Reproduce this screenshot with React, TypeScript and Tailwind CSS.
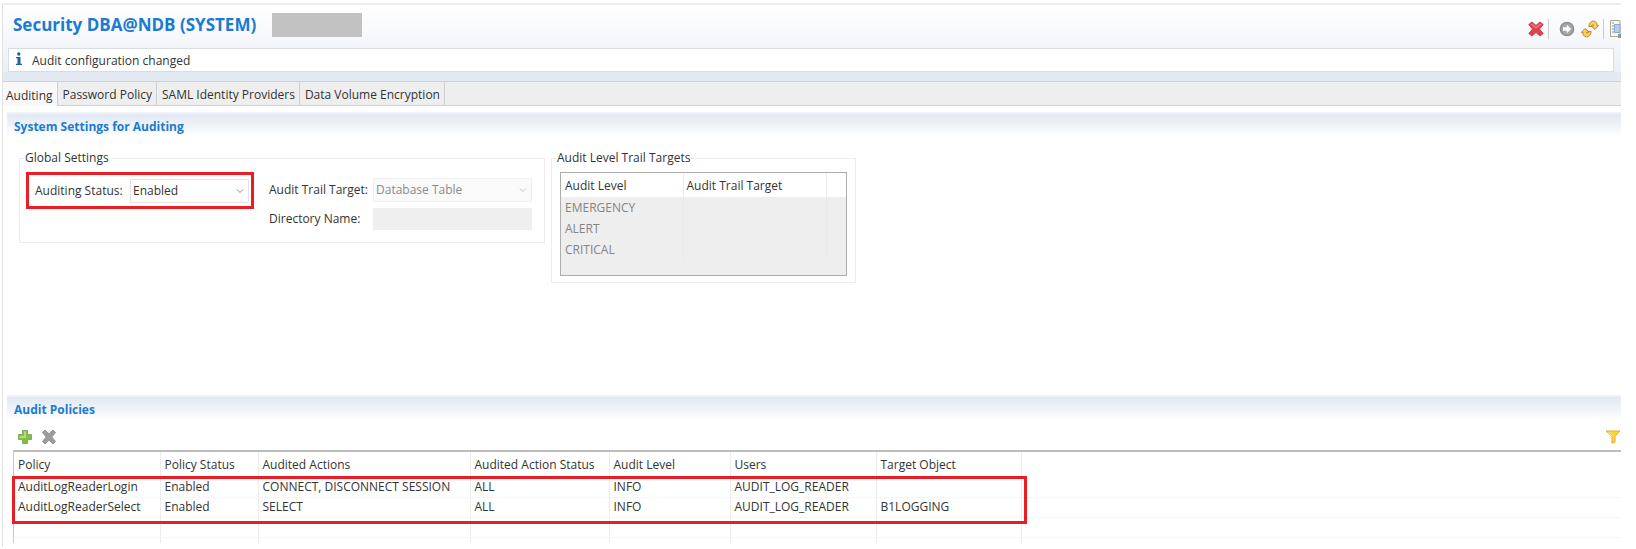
import React from "react";

const tabs = ["Auditing", "Password Policy", "SAML Identity Providers", "Data Volume Encryption"];

const levels = ["EMERGENCY", "ALERT", "CRITICAL"];

const headings = [
  "Policy",
  "Policy Status",
  "Audited Actions",
  "Audited Action Status",
  "Audit Level",
  "Users",
  "Target Object",
];

const policies = [
  ["AuditLogReaderLogin", "Enabled", "CONNECT, DISCONNECT SESSION", "ALL", "INFO", "AUDIT_LOG_READER", ""],
  ["AuditLogReaderSelect", "Enabled", "SELECT", "ALL", "INFO", "AUDIT_LOG_READER", "B1LOGGING"],
];

function RedCross() {
  return (
    <svg width="16" height="16" viewBox="0 0 16 16" aria-hidden="true">
      <path
        d="M4 1 .8 3.500 4.500 8 .8 12.500 4 15l4-3.500 4 3.500 3.200-2.500L11.500 8l3.700-4.500L12 1 8 4.500Z"
        fill="#dc4550"
        stroke="#cf3f4b"
        strokeLinejoin="round"
      />
      <path d="M3.200 3 8 6.800 12.800 3" fill="none" stroke="#ef8187" strokeWidth="1.200" />
    </svg>
  );
}

function ArrowDisc() {
  return (
    <svg width="16" height="16" viewBox="0 0 16 16" aria-hidden="true">
      <circle cx="8" cy="8" r="6.600" fill="#a6a6a6" stroke="#8f8f8f" strokeWidth="1.500" />
      <path d="M4 6.300h3.800V3.800L12.300 8l-4.500 4.200V9.700H4Z" fill="#fff" />
    </svg>
  );
}

function Refresh() {
  return (
    <svg width="18" height="18" viewBox="0 0 18 18" aria-hidden="true">
      <g fill="#f6cf5c" stroke="#bb8a2c" strokeLinejoin="round">
        <path d="M7.800 6.500C8 2.800 10.500.8 13.200 1.200c2 .3 3 2 2.800 4.300h1.500L14 9.500l-4-3.500 2.600-.2c0-1.600-1.800-1.600-2.300.9Z" />
        <path d="M10.200 11.500c-.2 3.700-2.700 5.700-5.400 5.300-2-.3-3-2-2.800-4.300H.5L4 8.500l4 3.500-2.600.2c0 1.600 1.800 1.600 2.300-.9Z" />
      </g>
    </svg>
  );
}

function ReportPage() {
  return (
    <svg width="11" height="20" viewBox="0 0 11 20" aria-hidden="true">
      <path d="M.5 1.500H10v16H.5Z" fill="#f4f6fa" stroke="#b3a88a" />
      <path d="M2 4h2M2 7h2M2 10h2M2 13h2" stroke="#8c98ab" />
      <path d="M4.500 5.500H10v8H4.500Z" fill="#b4cbee" stroke="#8ba9d2" />
      <path d="M8 15h3v4H8Z" fill="#8d96a4" />
    </svg>
  );
}

function Plus() {
  return (
    <svg width="16" height="16" viewBox="0 0 16 16" aria-hidden="true">
      <path
        d="M5.500 1.500h5v4h4v5h-4v4h-5v-4h-4v-5h4Z"
        fill="#84bd48"
        stroke="#7fae62"
        strokeLinejoin="round"
      />
      <path d="M8 2.500V8H2.500" fill="none" stroke="#b9dc72" strokeWidth="2" />
    </svg>
  );
}

function GreyCross() {
  return (
    <svg width="16" height="16" viewBox="0 0 16 16" aria-hidden="true">
      <path
        d="M4 1 1.500 3.500 5.200 8l-3.700 4.500L4 15l4-3.800L12 15l2.500-2.500L10.800 8l3.700-4.500L12 1 8 4.800Z"
        fill="#9c9c9c"
        stroke="#949494"
        strokeLinejoin="round"
      />
    </svg>
  );
}

function Funnel() {
  return (
    <svg width="16" height="14" viewBox="0 0 16 14" aria-hidden="true">
      <path d="M1 1h14l-5 5.500V12L7 13.200V6.500Z" fill="#fbd531" stroke="#e6ad35" strokeLinejoin="round" />
      <path d="M3.500 2.500 7.500 6.500" stroke="#fff0a0" />
    </svg>
  );
}

function Combo({ id, value, options, disabled }: { id: string; value: string; options: string[]; disabled?: boolean }) {
  return (
    <div className="relative grow">
      <select
        id={id}
        defaultValue={value}
        disabled={disabled}
        className="h-6 w-full appearance-none border border-[#e3e3e3] bg-white px-0.5 text-[#333] opacity-100 disabled:border-[#f0f0f0] disabled:bg-[#fafafa] disabled:text-[#8a8a8a]"
      >
        {options.map((o) => (
          <option key={o}>{o}</option>
        ))}
      </select>
      <svg
        className={disabled ? "pointer-events-none absolute top-2 right-1 text-[#c4c4c4]" : "pointer-events-none absolute top-2 right-1 text-[#8a8a8a]"}
        width="10"
        height="8"
        viewBox="0 0 10 8"
        aria-hidden="true"
      >
        <path d="m2 2.500 3 3 3-3" fill="none" stroke="currentColor" />
      </svg>
    </div>
  );
}

function SectionTitle({ children }: { children: React.ReactNode }) {
  return (
    <h2 className="h-7 border-t-2 border-[#eef2f8] bg-linear-to-b from-[#e1e8f2] to-white to-90% pl-[7px] text-xs leading-[26px] font-bold text-[#1a7bd0]">
      {children}
    </h2>
  );
}

export default function App() {
  return (
    <main className="mt-[3px] mr-[15px] ml-0.5 border-l border-[#e2e2e2] bg-white pb-1 font-['Open_Sans','Noto_Sans',sans-serif] text-xs text-[#333]">
      <header className="border-t-2 border-[#e9ebef] bg-linear-to-b from-white to-[#e9eef6]">
        <div className="flex h-[43px] items-center">
          <h1 className="pb-1 pl-2.5 text-[17px] leading-6 font-bold text-[#1a7bd0]">Security DBA@NDB (SYSTEM)</h1>
          <div className="mb-1 ml-4 h-6 w-[90px] bg-[#c2c2c2]" />
          <div className="ml-auto flex items-center pt-1">
            <button type="button" aria-label="Delete"><RedCross /></button>
            <span className="mx-1 h-5 w-px bg-[#c8ccd2]" />
            <button type="button" aria-label="Deploy" className="ml-1.5"><ArrowDisc /></button>
            <button type="button" aria-label="Refresh" className="ml-1.5"><Refresh /></button>
            <span className="mr-1.5 ml-1 h-5 w-px bg-[#c8ccd2]" />
            <button type="button" aria-label="Report"><ReportPage /></button>
          </div>
        </div>
        <div className="mr-[7px] ml-[5px] flex h-6 items-center border border-[#d9dde3] bg-white pt-0.5">
          <svg className="mb-1 ml-1.5" width="8" height="14" viewBox="0 0 8 14" aria-hidden="true">
            <circle cx="3.800" cy="2" r="1.700" fill="#1d6699" />
            <path d="M1 5h4.500v6.800H7V13H1v-1.200h1.500V6.200H1Z" fill="#1d6699" />
          </svg>
          <p className="ml-[9px]">Audit configuration changed</p>
        </div>
        <div className="h-[9px] bg-[#e3e9f3]" />
      </header>

      <div role="tablist" className="flex h-[25px] border-t border-b border-[#d0d0d0] bg-[#eeeeee]">
        {tabs.map((t, i) => (
          <button
            key={t}
            type="button"
            role="tab"
            aria-selected={i === 0}
            className={
              i === 0
                ? "-mb-px border-r border-[#cfcfcf] bg-[#f8f8f8] pt-1 pr-1 pl-[3px]"
                : "border-r border-[#cfcfcf] pt-[3px] pr-1 pl-[5px]"
            }
          >
            {t}
          </button>
        ))}
      </div>

      <section className="ml-1 pt-1.5">
        <SectionTitle>System Settings for Auditing</SectionTitle>
        <div className="flex min-h-[255px] items-start gap-1.5 pt-2.5 pl-3">
          <fieldset className="h-[93px] w-[526px] border border-[#ececec] pl-1.5">
            <legend className="-ml-0.5 h-4 px-px leading-4">Global Settings</legend>
            <div className="flex gap-3 pt-1.5">
              <div className="flex h-[37px] w-[228px] items-center gap-1 border-3 border-[#ec1c24] pr-0.5 pl-1.5">
                <label htmlFor="status" className="w-[91px]">Auditing Status:</label>
                <Combo id="status" value="Enabled" options={["Enabled", "Disabled"]} />
              </div>
              <div className="grid w-[266px] grid-cols-[104px_1fr] items-center gap-y-1.5 self-start pt-1.5 pl-[3px]">
                <label htmlFor="target">Audit Trail Target:</label>
                <Combo id="target" value="Database Table" options={["Database Table", "CSV Text File"]} disabled />
                <label htmlFor="directory">Directory Name:</label>
                <input id="directory" disabled className="h-[22px] w-full bg-[#efefef] px-1" />
              </div>
            </div>
          </fieldset>

          <fieldset className="h-[133px] w-[305px] border border-[#ececec] px-2">
            <legend className="-ml-1 h-4 px-px leading-4">Audit Level Trail Targets</legend>
            <div className="mt-1.5 h-[104px] border border-[#adadad] bg-[#eeeeee]">
              <table className="w-full table-fixed text-left">
                <colgroup>
                  <col className="w-[122px]" />
                  <col />
                  <col className="w-5" />
                </colgroup>
                <thead className="bg-white">
                  <tr className="h-6">
                    <th className="border-r border-[#ececec] pt-0.5 pl-1 font-normal">Audit Level</th>
                    <th className="border-r border-[#ececec] pt-0.5 pl-[3px] font-normal">Audit Trail Target</th>
                    <td />
                  </tr>
                </thead>
                <tbody className="text-[#858585]">
                  {levels.map((l) => (
                    <tr key={l} className="h-[21px]">
                      <td className="border-r border-[#e9e9e9] pl-1">{l}</td>
                      <td className="border-r border-[#e9e9e9]" />
                      <td />
                    </tr>
                  ))}
                </tbody>
              </table>
            </div>
          </fieldset>
        </div>
      </section>

      <section className="ml-1">
        <SectionTitle>Audit Policies</SectionTitle>
        <div className="flex h-[27px] items-center gap-2 pl-2.5">
          <button type="button" aria-label="Add policy"><Plus /></button>
          <button type="button" aria-label="Remove policy"><GreyCross /></button>
          <button type="button" aria-label="Filter" className="ml-auto"><Funnel /></button>
        </div>
        <div className="relative ml-1.5 border-t-2 border-l border-t-[#bcbcbc] border-l-[#c8c8c8]">
          <table className="w-full table-fixed text-left whitespace-nowrap">
            <colgroup>
              <col className="w-[146px]" />
              <col className="w-[98px]" />
              <col className="w-[212px]" />
              <col className="w-[139px]" />
              <col className="w-[121px]" />
              <col className="w-[146px]" />
              <col className="w-[145px]" />
              <col />
            </colgroup>
            <thead>
              <tr className="h-[25px]">
                {headings.map((h) => (
                  <th key={h} className="border-r border-[#ececec] pl-1 font-normal">{h}</th>
                ))}
                <td />
              </tr>
            </thead>
            <tbody>
              {policies.map((row) => (
                <tr key={row[0]} className="h-5 border-b border-[#f6f6f6]">
                  {row.map((cell, i) => (
                    <td key={i} className="border-r border-[#ececec] pl-1">{cell}</td>
                  ))}
                  <td />
                </tr>
              ))}
              <tr className="h-5 border-b border-[#f6f6f6]">
                {headings.map((h) => (
                  <td key={h} className="border-r border-[#ececec]" />
                ))}
                <td />
              </tr>
              <tr className="h-1.5">
                {headings.map((h) => (
                  <td key={h} className="border-r border-[#ececec]" />
                ))}
                <td />
              </tr>
            </tbody>
          </table>
          <div className="pointer-events-none absolute top-6 -left-0.5 h-12 w-[1015px] border-3 border-[#ec1c24]" />
        </div>
      </section>
    </main>
  );
}
